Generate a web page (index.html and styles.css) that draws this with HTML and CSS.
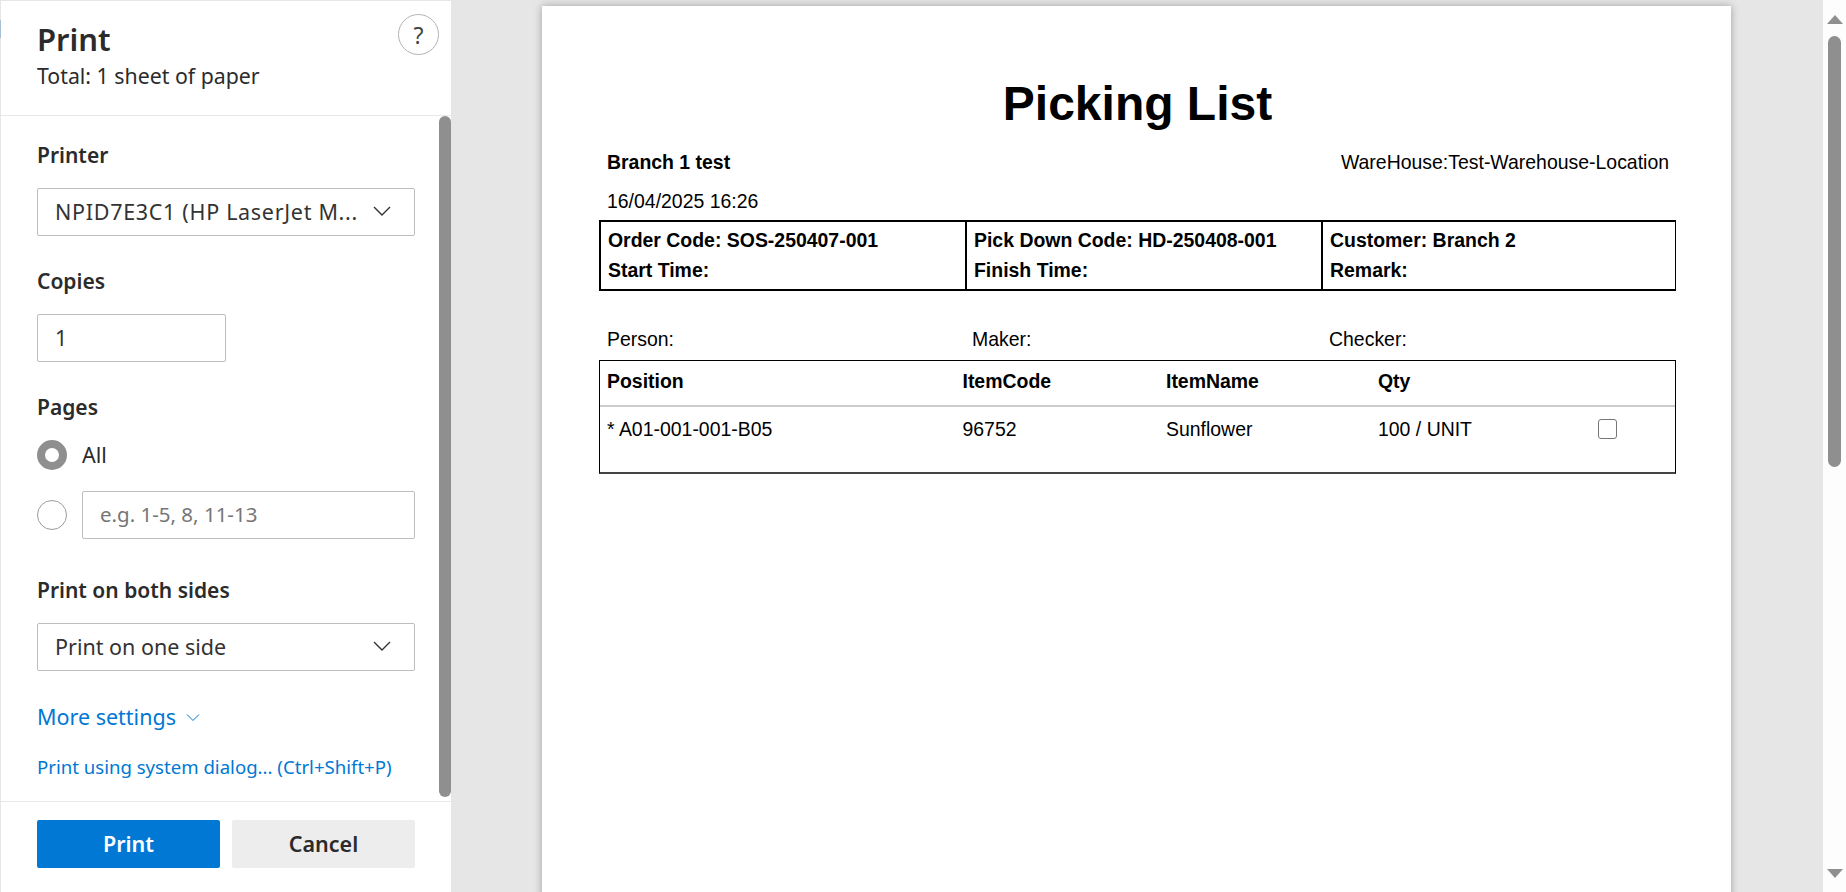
FILE: index.html
```html
<!DOCTYPE html>
<html lang="en">
<head>
  <meta charset="UTF-8">
  <title>Print</title>
  <link rel="stylesheet" href="styles.css">
</head>
<body>

<div class="app">
  <!-- Print settings -->
  <aside class="sidebar">
    <header class="side-header">
      <div>
        <h1>Print</h1>
        <p class="total">Total: 1 sheet of paper</p>
      </div>
      <button class="help">?</button>
    </header>

    <div class="side-body">
      <div class="settings">
        <h2 class="label first">Printer</h2>
        <div class="select printer">
          <span>NPID7E3C1 (HP LaserJet M...</span>
          <svg class="chev" width="20" height="12" viewBox="0 0 20 12"><path d="M2 2l8 8 8-8" fill="none" stroke="#333" stroke-width="1.4"/></svg>
        </div>

        <h2 class="label">Copies</h2>
        <div class="field copies">1</div>

        <h2 class="label">Pages</h2>
        <div class="radio-row">
          <span class="radio on"></span>
          <span class="radio-text">All</span>
        </div>
        <div class="radio-row range">
          <span class="radio"></span>
          <div class="field grow placeholder">e.g. 1-5, 8, 11-13</div>
        </div>

        <h2 class="label sides">Print on both sides</h2>
        <div class="select">
          <span>Print on one side</span>
          <svg class="chev" width="20" height="12" viewBox="0 0 20 12"><path d="M2 2l8 8 8-8" fill="none" stroke="#333" stroke-width="1.4"/></svg>
        </div>

        <div class="more">
          More settings
          <svg width="14" height="9" viewBox="0 0 14 9"><path d="M1 1.5l6 6 6-6" fill="none" stroke="#0078d4" stroke-width="1"/></svg>
        </div>
        <div class="system">Print using system dialog... (Ctrl+Shift+P)</div>
      </div>
      <div class="side-scroll"></div>
    </div>

    <footer class="side-footer">
      <button class="btn primary">Print</button>
      <button class="btn">Cancel</button>
    </footer>
  </aside>

  <!-- Preview -->
  <main class="preview">
    <div class="paper">
      <div class="paper-title">Picking List</div>

      <div class="meta-row">
        <b>Branch 1 test</b>
        <span>WareHouse:Test-Warehouse-Location</span>
      </div>
      <div class="meta-date">16/04/2025 16:26</div>

      <div class="order-box">
        <div class="order-cell">
          <div>Order Code: SOS-250407-001</div>
          <div>Start Time:</div>
        </div>
        <div class="order-cell">
          <div>Pick Down Code: HD-250408-001</div>
          <div>Finish Time:</div>
        </div>
        <div class="order-cell">
          <div>Customer: Branch 2</div>
          <div>Remark:</div>
        </div>
      </div>

      <div class="people">
        <span>Person:</span>
        <span>Maker:</span>
        <span>Checker:</span>
      </div>

      <div class="items">
        <div class="items-row items-head">
          <span>Position</span>
          <span>ItemCode</span>
          <span>ItemName</span>
          <span>Qty</span>
          <span></span>
        </div>
        <div class="items-row items-body">
          <span>* A01-001-001-B05</span>
          <span>96752</span>
          <span>Sunflower</span>
          <span>100 / UNIT</span>
          <span class="check"></span>
        </div>
      </div>
    </div>
  </main>

  <!-- Page scrollbar -->
  <div class="page-scroll">
    <svg class="arrow" width="16" height="9" viewBox="0 0 16 9"><path d="M8 0l8 9H0z" fill="#8f8f8f"/></svg>
    <div class="page-thumb"></div>
    <svg class="arrow down" width="16" height="9" viewBox="0 0 16 9"><path d="M0 0h16L8 9z" fill="#8f8f8f"/></svg>
  </div>
</div>

</body>
</html>
```

FILE: styles.css
```css
/* General Reset */
* {
    margin: 0;
    padding: 0;
    box-sizing: border-box;
}

html, body {
    height: 100%;
    overflow: hidden;
}

body {
    font-family: 'Noto Sans', sans-serif;
    color: #2b2b2b;
    background-color: #e6e6e6;
}

.app {
    display: flex;
    height: 892px;
}

/* Sidebar */
.sidebar {
    position: relative;
    width: 451px;
    flex-shrink: 0;
    display: flex;
    flex-direction: column;
    background-color: #fff;
    border-left: 1px solid #e6e6e6;
    border-top: 1px solid #e6e6e6;
}

/* sliver of the window behind the dialog */
.sidebar::before {
    content: "";
    position: absolute;
    left: -1px;
    top: 19px;
    width: 1px;
    height: 18px;
    background-color: #a9c0d4;
}

.side-header {
    height: 115px;
    flex-shrink: 0;
    display: flex;
    justify-content: space-between;
    align-items: flex-start;
    padding: 18px 12px 0 36px;
    border-bottom: 1px solid #e8e8e8;
}

h1 {
    font-size: 31px;
    line-height: 40px;
    font-weight: 600;
}

.total {
    font-size: 21.3px;
    line-height: 26px;
    margin-top: 4px;
}

.help {
    width: 41px;
    height: 41px;
    margin-top: -5px;
    border: 1px solid #b3b3b3;
    border-radius: 50%;
    background-color: #fff;
    color: #444;
    font-family: 'Noto Sans', sans-serif;
    font-size: 23px;
}

.side-body {
    flex: 1;
    display: flex;
    min-height: 0;
}

.settings {
    flex: 1;
    min-width: 0;
    padding: 0 24px 0 36px;
}

.side-scroll {
    width: 12px;
    height: 681px;
    border-radius: 6px;
    background-color: #8f8f8f;
}

.label {
    font-size: 21px;
    line-height: 26px;
    font-weight: 600;
    margin-top: 32px;
    margin-bottom: 20px;
}

.label.first {
    margin-top: 26px;
}

.label.sides {
    margin-top: 38px;
}

.select, .field {
    height: 48px;
    border: 1px solid #bdbdbd;
    border-radius: 2px;
    font-size: 21.5px;
    display: flex;
    align-items: center;
    padding-left: 17px;
    padding-bottom: 2px;
    color: #333;
}

.select {
    justify-content: space-between;
    padding-right: 22px;
}

.select.printer {
    letter-spacing: 0.7px;
}

.chev {
    flex-shrink: 0;
}

.copies {
    width: 189px;
}

.radio-row {
    display: flex;
    align-items: center;
    gap: 15px;
    height: 30px;
    font-size: 21.5px;
}

.radio-text {
    margin-top: -2px;
}

.radio-row.range {
    height: 48px;
    margin-top: 21px;
}

.radio {
    width: 30px;
    height: 30px;
    flex-shrink: 0;
    border: 1px solid #9a9a9a;
    border-radius: 50%;
}

.radio.on {
    border: 8px solid #8f8f8f;
}

.grow {
    flex: 1;
}

.placeholder {
    color: #767676;
    font-size: 20.5px;
}

.more {
    display: flex;
    align-items: center;
    gap: 10px;
    margin-top: 33px;
    color: #0078d4;
    font-size: 21.5px;
    line-height: 26px;
}

.system {
    margin-top: 25px;
    color: #0078d4;
    font-size: 18.6px;
    line-height: 24px;
    white-space: nowrap;
}

.side-footer {
    height: 91px;
    flex-shrink: 0;
    display: flex;
    gap: 12px;
    padding: 18px 36px 0;
    border-top: 1px solid #e8e8e8;
}

.btn {
    flex: 1;
    height: 48px;
    padding-bottom: 2px;
    border: none;
    border-radius: 2px;
    background-color: #ededed;
    color: #2b2b2b;
    font-family: 'Noto Sans', sans-serif;
    font-size: 21.5px;
    font-weight: 600;
}

.btn.primary {
    background-color: #0078d4;
    color: #fff;
}

/* Preview */
.preview {
    flex: 1;
    display: flex;
    justify-content: center;
    padding: 6px 1px 0 0;
    overflow: hidden;
}

.paper {
    width: 1189px;
    height: 1000px;
    flex-shrink: 0;
    padding: 0 55px 0 57px;
    background-color: #fff;
    box-shadow: 0 0 8px rgba(0, 0, 0, 0.3);
    font-family: 'Liberation Sans', Arial, sans-serif;
    font-size: 19.45px;
    color: #000;
}

.paper-title {
    padding-top: 68px;
    text-align: center;
    font-size: 48px;
    line-height: 60px;
    font-weight: bold;
}

.meta-row {
    display: flex;
    justify-content: space-between;
    margin-top: 15px;
    padding: 0 7px 0 8px;
    line-height: 26px;
}

.meta-date {
    padding-left: 8px;
    margin-top: 13px;
    margin-bottom: 6px;
    line-height: 26px;
}

.order-box {
    display: grid;
    grid-template-columns: 364px 356px 1fr;
    height: 71px;
    border: 2px solid #000;
    border-right-width: 1px;
    font-weight: bold;
    line-height: 30px;
}

.order-cell {
    padding: 3px 0 0 7px;
}

.order-cell + .order-cell {
    border-left: 2px solid #000;
}

.people {
    display: grid;
    grid-template-columns: 365px 357px 1fr;
    padding-left: 8px;
    margin-top: 35px;
    line-height: 26px;
}

.items {
    height: 114px;
    margin-top: 8px;
    border: 1px solid #000;
    border-bottom: 2px solid #444;
}

.items-row {
    display: grid;
    grid-template-columns: 355.5px 203.5px 212px 220px 1fr;
    padding-left: 7px;
    align-items: center;
}

.items-head {
    height: 46px;
    padding-bottom: 3px;
    border-bottom: 2px solid #ccc;
    font-weight: bold;
}

.items-body {
    height: 46px;
    padding-bottom: 1px;
}

.check {
    width: 19px;
    height: 20px;
    border: 1.5px solid #767676;
    border-radius: 3px;
    margin-top: -2px;
}

/* Page scrollbar */
.page-scroll {
    width: 23px;
    flex-shrink: 0;
    display: flex;
    flex-direction: column;
    align-items: center;
    padding: 15px 0 14px;
    background-color: #fdfdfd;
}

.page-thumb {
    width: 13px;
    height: 431px;
    margin-top: 12px;
    border-radius: 7px;
    background-color: #8f8f8f;
}

.arrow.down {
    margin-top: auto;
}
```
